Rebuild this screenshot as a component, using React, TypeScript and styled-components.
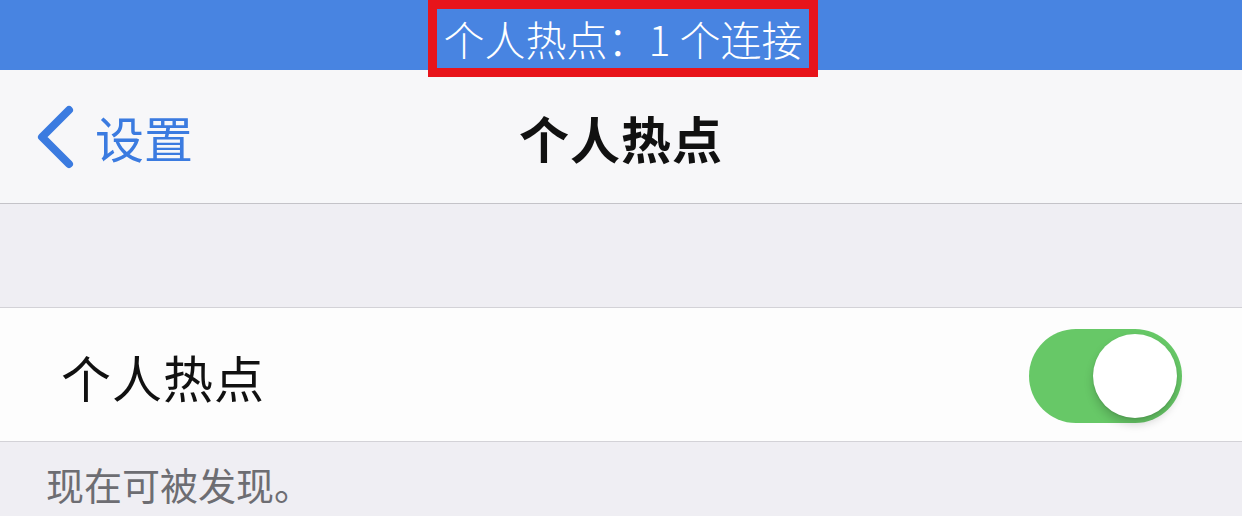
import styled, { createGlobalStyle } from "styled-components";

const GlobalStyle = createGlobalStyle`
  html, body {
    margin: 0;
    padding: 0;
    background: #efeef3;
    font-family: "Noto Sans CJK SC", "Noto Sans", sans-serif;
  }
`;

const Screen = styled.div`
  width: 1242px;
  height: 516px;
  overflow: hidden;
  display: flex;
  flex-direction: column;
  background: #efeef3;
`;

const StatusBar = styled.div`
  height: 70px;
  flex-shrink: 0;
  background: #4884e1;
  display: flex;
  justify-content: center;
  align-items: flex-start;
`;

// red annotation frame drawn over the status bar
const Highlight = styled.div`
  position: relative;
  z-index: 2;
  box-sizing: border-box;
  width: 390px;
  height: 77px;
  margin-left: 4px;
  border: 9px solid #e8141b;
  display: flex;
  align-items: center;
  justify-content: center;
  color: #fff;
  font-size: 41px;
  font-weight: 300;
  white-space: pre;
  padding-bottom: 2px;
`;

const NavBar = styled.div`
  height: 133px;
  flex-shrink: 0;
  background: #f7f7f9;
  border-bottom: 1px solid #c4c3c8;
  display: grid;
  grid-template-columns: 1fr auto 1fr;
  align-items: center;
`;

const BackButton = styled.div`
  display: flex;
  align-items: center;
  gap: 19px;
  padding-left: 36px;
  color: #3b7be0;
  font-size: 49px;
`;

const Title = styled.div`
  font-size: 50px;
  font-weight: 700;
  color: #111;
  letter-spacing: 1px;
`;

const Spacer = styled.div`
  height: 103px;
  flex-shrink: 0;
  background: #efeef3;
  border-bottom: 1px solid #d3d2d7;
`;

const Row = styled.div`
  height: 133px;
  flex-shrink: 0;
  background: #fdfdfd;
  border-bottom: 1px solid #d3d2d7;
  display: flex;
  align-items: center;
  justify-content: space-between;
  padding: 0 60px 0 61px;
`;

const RowLabel = styled.div`
  font-size: 50px;
  color: #111;
  letter-spacing: 1px;
  margin-top: 2px;
`;

const Toggle = styled.div<{ on: boolean }>`
  position: relative;
  width: 153px;
  height: 94px;
  border-radius: 47px;
  background: ${(p) => (p.on ? "#67c867" : "#e5e5ea")};
  margin-top: 2px;
`;

const Knob = styled.div<{ on: boolean }>`
  position: absolute;
  top: 5px;
  left: ${(p) => (p.on ? "64px" : "5px")};
  width: 84px;
  height: 84px;
  border-radius: 50%;
  background: #fff;
  box-shadow: 0 6px 10px rgba(0, 0, 0, 0.18), 0 1px 2px rgba(0, 0, 0, 0.1);
`;

const Footer = styled.div`
  flex: 1;
  background: #efeef3;
  padding: 19px 0 0 46px;
  font-size: 38px;
  line-height: 1.2;
  color: #6d6d72;
`;

const Chevron = () => (
  <svg width="40" height="64" viewBox="0 0 40 64">
    <polyline
      points="33,5 6,32 33,59"
      fill="none"
      stroke="#3b7be0"
      strokeWidth="8"
      strokeLinecap="round"
      strokeLinejoin="round"
    />
  </svg>
);

const App = () => {
  const hotspotOn = true;
  return (
    <>
      <GlobalStyle />
      <Screen>
        <StatusBar>
          <Highlight>个人热点：1 个连接</Highlight>
        </StatusBar>
        <NavBar>
          <BackButton>
            <Chevron />
            <span>设置</span>
          </BackButton>
          <Title>个人热点</Title>
          <div />
        </NavBar>
        <Spacer />
        <Row>
          <RowLabel>个人热点</RowLabel>
          <Toggle on={hotspotOn}>
            <Knob on={hotspotOn} />
          </Toggle>
        </Row>
        <Footer>现在可被发现。</Footer>
      </Screen>
    </>
  );
};

export default App;
